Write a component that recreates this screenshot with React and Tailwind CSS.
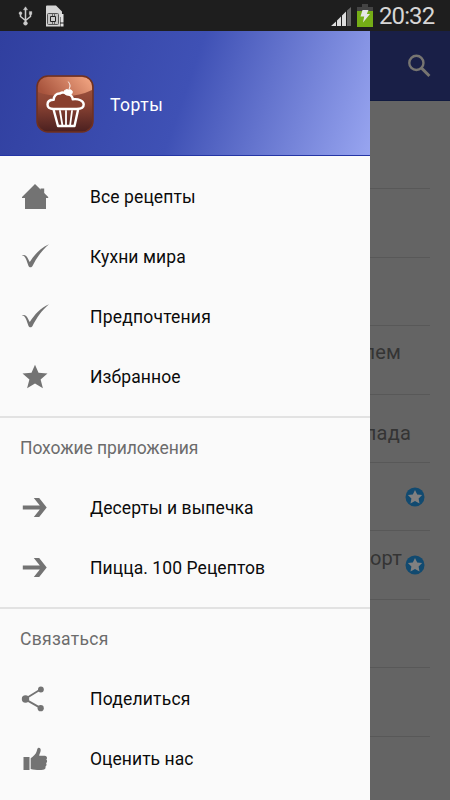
const HomeIcon = () => (
  <svg viewBox="0 0 28 28" className="size-7 fill-[#737373]">
    <path d="M14 1 27.200 14v1h-2.200v11H4V15H1v-1L14 1Z" />
    <path d="M19.500 5.500H23.200v7l-3.700-3.500Z" />
  </svg>
);
const CheckIcon = () => (
  <svg viewBox="0 0 28 28" className="size-7 fill-[#737373]">
    <path d="M.7 12.300c1.800-.7 3.900-.1 4.900 1.200 1.300 1.700 2.100 3.800 3.200 5.500C13.500 11.500 19.500 5 28 1.200 20.500 7.500 15.500 15 11.500 23c-.9 1.800-3.200 1.800-4 0C6.100 19.800 5.300 15.200 3 13.100c-.6-.5-1.500-.6-2.300-.8Z" />
  </svg>
);
const StarIcon = () => (
  <svg viewBox="0 0 28 28" className="size-7 fill-[#737373]">
    <path d="m14 1.700 3.500 8 9 .8-6.900 5.900 2.300 8.900-7.900-4.800-7.900 4.800 2.300-8.900-6.900-5.900 9-.8Z" />
  </svg>
);
const ArrowIcon = () => (
  <svg viewBox="0 0 28 28" className="size-7 fill-[#737373]">
    <path d="M12.800 4h5.400l7.500 9.500-7.500 9.500h-5.400l6-7.500H1.800v-4h17Z" />
  </svg>
);
const ShareIcon = () => (
  <svg viewBox="0 0 28 28" className="size-7 fill-[#737373]">
    <path d="m4 14.100 15.800-9.800M4 14.100l15.800 9" className="stroke-[#737373] stroke-[1.800]" />
    <circle cx="4.500" cy="14" r="3.700" />
    <circle cx="19.900" cy="4.500" r="2.900" />
    <circle cx="19.700" cy="23.200" r="3.100" />
  </svg>
);
const ThumbIcon = () => (
  <svg viewBox="0 0 28 28" className="size-7 fill-[#737373]">
    <path d="M2.500 12h6v13h-6Z" />
    <path d="M9.700 13.200c2.700-1.700 5.300-4 6.100-7.100.4-1.800.7-3.200 1.900-3.300 1.900-.1 2.300 1.900 1.800 3.600-.5 1.700-1.200 2.900-1.300 4.300h5.500c2.300 0 3 2.600 1.600 3.800 1.200 1 1 2.900-.2 3.700.8 1.200.4 2.700-.7 3.400.5 1.700-.5 3-2.400 3.200-4 .4-8.700.1-12.300-.8Z" />
  </svg>
);

const CakeLogo = () => (
  <svg viewBox="0 0 58 58" className="size-[58px] shrink-0">
    <defs>
      <linearGradient id="base" x2="0" y2="1">
        <stop stopColor="#a65a43" />
        <stop offset=".5" stopColor="#8b4333" />
        <stop offset="1" stopColor="#4b2020" />
      </linearGradient>
      <linearGradient id="gloss" x1="0" x2="1" y1=".5" y2=".2">
        <stop stopColor="#a8543d" />
        <stop offset="1" stopColor="#f1a481" />
      </linearGradient>
    </defs>
    <rect x="1" y="1" width="56" height="56" rx="11" fill="url(#base)" />
    <path d="M2 17V12Q2 2 12 2h34q10 0 10 10v3Q44 21 29 21 11 21 2 17Z" fill="url(#gloss)" />
    <rect x="1" y="1" width="56" height="56" rx="11" fill="none" stroke="#70301f" strokeWidth="1.500" />
    <g fill="none" stroke="#fff" strokeLinecap="round" strokeLinejoin="round">
      <path d="M17.500 34c-4 0-6-1.700-6-4.500 0-3 2.500-4.700 6.200-4.700 0-3.800 2.800-6.500 6.200-6.200 2-1.600 5.300-1.300 6.800.7 3.500-.3 6 2 6 5 6-.8 11 1.600 11 5.200 0 3.100-2.800 4.500-7 4.500Z" fill="#89402f" strokeWidth="2.400" />
      <path d="M17.700 35 22 51h16.500L42 35" strokeWidth="2.400" />
      <path d="M24 36l2.500 15M30 36v15M36 36l-2 15" strokeWidth="1.800" />
      <path d="M33 14c2-3 .8-5-.5-7" strokeWidth="1" />
      <path d="M28.500 16c1-1.800 3-2 4-1 2-.8 4.200.3 3.800 2.500-.4 2.300-3 3-4.800 2.300-2.300-.2-3.500-2-3-3.800Z" fill="#fff" strokeWidth="1" />
    </g>
  </svg>
);

const StarBadge = () => (
  <svg viewBox="0 0 20 20" className="size-5">
    <circle cx="10" cy="10" r="9.500" fill="#114a70" />
    <path d="m10 3 2.200 4.400 4.900.7-3.500 3.400.9 4.900-4.500-2.300-4.500 2.300.9-4.900-3.500-3.400 4.900-.7Z" fill="#808080" />
  </svg>
);

const StatusBar = () => (
  <div className="flex h-[31px] shrink-0 items-center bg-[#1e1e1e] pr-[15px] pl-[18px]">
    <svg viewBox="0 0 15 20" className="h-5 w-[15px]" fill="#ccc" stroke="#ccc">
      <path d="M7.500 3v14M2.500 7v3.500l5 4 5-4V7" fill="none" strokeWidth="1.500" />
      <path d="m7.500.8 2 3h-4Z" strokeWidth=".5" />
      <circle cx="2.500" cy="7.200" r="1.400" strokeWidth=".5" />
      <path d="M11.300 5.500h2.600v3h-2.600Z" strokeWidth=".3" />
      <circle cx="7.500" cy="17.300" r="1.900" strokeWidth=".5" />
    </svg>
    <svg viewBox="0 0 20 22" className="ml-3 h-[22px] w-5">
      <path d="M1 1.500Q1 .5 2 .5h9l6 6V12h-2v9.500H1Z" fill="#d5d5d5" />
      <rect x="2.500" y="8.500" width="11" height="11" rx="1" fill="#c4c4c4" stroke="#555" strokeWidth="1" />
      <path d="M5.500 11.500h5v5h-5Z" fill="#ccc" stroke="#222" />
      <path d="M7.500 9v2M9.500 9v2M7.500 17v2M9.500 17v2" fill="none" stroke="#666" />
      <path d="M15.500 9h3v8.500h-3ZM15.500 18.500h3v3h-3Z" fill="#e3e3e3" />
    </svg>
    <div className="flex-1" />
    <svg viewBox="0 0 20 20" className="mt-0.5 h-5 w-5">
      <path d="M0 19 5 14.500V19ZM6 19v-5.500L10 9.500V19ZM11 19V8.500l4-4V19Z" fill="#ddd" />
      <path d="M16 19V3.500L20 0v19Z" fill="#666" />
    </svg>
    <svg viewBox="0 0 16 23" className="ml-[6px] h-[23px] w-4">
      <path d="M0 3h5V0h6v3h5v5H0Z" fill="#444" />
      <path d="M0 7h16v16H0Z" fill="#75ad16" />
      <path d="M5.500 6h6L9.800 10H13L6 18.500l1.200-6H3.500Z" fill="#e6e6e6" />
    </svg>
    <span className="ml-[6px] w-14 text-[24px] leading-none tracking-[-0.9px] whitespace-nowrap text-[#d6d6d6]">20:32</span>
  </div>
);

const entries = [
  {}, {}, {},
  { text: "лем", pos: "pr-[49px] pb-[16px]" },
  { text: "лада", pos: "pr-[39px] pt-[9px]" },
  { star: true },
  { text: "орт", pos: "pr-[48px] pb-[15px]", star: true },
  {}, {}, {},
];

const RecipeList = () => (
  <div className="flex h-[769px] flex-col overflow-hidden bg-[#646464]">
    <div className="flex h-[70px] shrink-0 items-center justify-end border-b border-[#101a40] bg-[#191f47] pr-[18px]">
      <svg viewBox="0 0 24 24" className="size-[25px]" fill="none" stroke="#777571" strokeWidth="2.300">
        <circle cx="9" cy="9.500" r="6.800" />
        <path d="m14 14.500 7.500 7.500" strokeWidth="2.800" />
      </svg>
    </div>
    <div className="h-5 shrink-0" />
    {entries.map((entry, i) => (
      <div key={i} className="h-[68.400px] shrink-0">
        <div className="grid h-full items-center justify-items-end">
          {entry.text && (
            <span className={"col-start-1 row-start-1 text-[20px] text-[#343434] tracking-[0.2px] " + entry.pos}>{entry.text}</span>
          )}
          {entry.star && (
            <span className="col-start-1 row-start-1 pr-[25px] pb-px"><StarBadge /></span>
          )}
        </div>
        <div className="mr-5 -mt-px h-px bg-[#585858]" />
      </div>
    ))}
  </div>
);

const Item = ({ icon: Icon, children, tracking }) => (
  <div className="flex h-[60px] items-center gap-[41px] pl-[21px]">
    <Icon />
    <span className={"pt-px text-[17.500px] whitespace-nowrap text-[#0b0b0b] " + tracking}>{children}</span>
  </div>
);

const Section = ({ children, tracking }) => (
  <div className={"mt-[9px] flex h-[62px] items-center border-t-2 border-[#e2e2e2] pt-px pl-5 text-[17.500px] text-[#6c6c6c] " + tracking}>
    {children}
  </div>
);

const Drawer = () => (
  <div className="absolute top-[31px] left-0 h-[769px] w-[370px] overflow-hidden bg-[#fafafa]">
    <div className="flex h-[125px] items-center gap-4 border-b border-[#2435a5] bg-[linear-gradient(109deg,#303f9f_0%,#3f51b5_50%,#98a5f0_100%)] pt-[21px] pl-9">
      <CakeLogo />
      <span className="pt-[3px] text-[17.500px] tracking-[0.5px] text-white">Торты</span>
    </div>
    <div className="h-[11px]" />
    <Item icon={HomeIcon} tracking="tracking-[0.100px]">Все рецепты</Item>
    <Item icon={CheckIcon} tracking="tracking-[0.100px]">Кухни мира</Item>
    <Item icon={CheckIcon} tracking="tracking-[0.200px]">Предпочтения</Item>
    <Item icon={StarIcon} tracking="tracking-[0.100px]">Избранное</Item>
    <Section tracking="tracking-[-0.100px]">Похожие приложения</Section>
    <Item icon={ArrowIcon} tracking="tracking-[0.080px]">Десерты и выпечка</Item>
    <Item icon={ArrowIcon} tracking="tracking-[0.080px]">Пицца. 100 Рецептов</Item>
    <Section tracking="tracking-[0.300px]">Связаться</Section>
    <Item icon={ShareIcon} tracking="tracking-[0.200px]">Поделиться</Item>
    <Item icon={ThumbIcon} tracking="tracking-[0.050px]">Оценить нас</Item>
  </div>
);

export default function App() {
  return (
    <div className="relative flex h-[800px] w-[450px] flex-col overflow-hidden font-['Roboto',sans-serif]">
      <StatusBar />
      <RecipeList />
      <Drawer />
    </div>
  );
}
